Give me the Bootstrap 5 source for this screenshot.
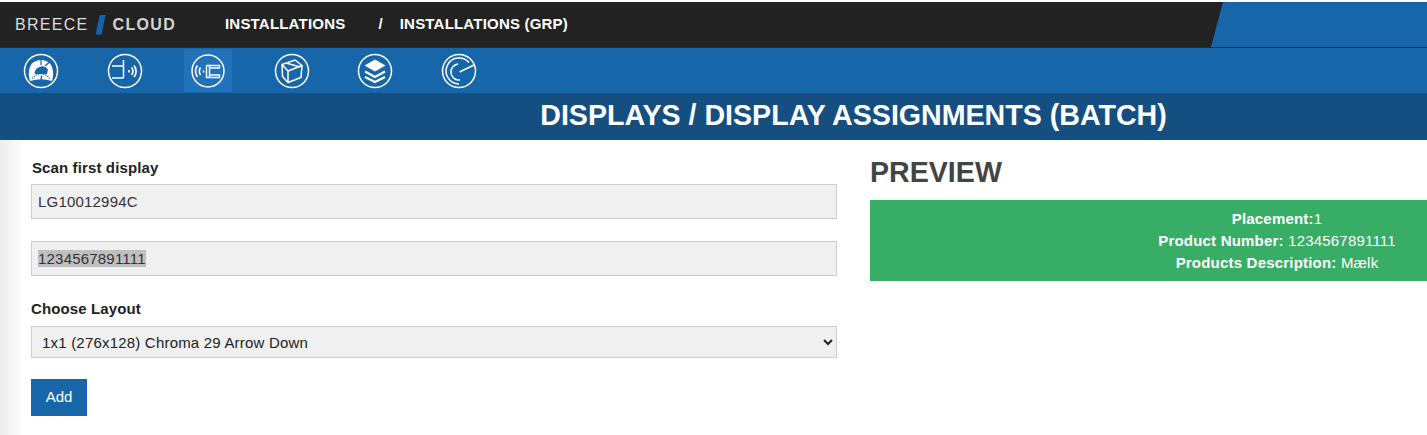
<!DOCTYPE html>
<html lang="en">
<head>
    <meta charset="UTF-8">
    <meta name="viewport" content="width=device-width, initial-scale=1.0">
    <title>Displays / Display Assignments (Batch)</title>
    <link href="https://cdn.jsdelivr.net/npm/bootstrap@5.3.0/dist/css/bootstrap.min.css" rel="stylesheet">
    <style>
        body {
            font-family: "Liberation Sans", Arial, sans-serif;
            font-size: 15px;
            letter-spacing: .2px;
            background: #fff;
            color: #222;
            padding-top: 2px;
            overflow: hidden;
        }
        .top-bar {
            height: 46px;
            background: #222;
            border-bottom: 1px solid #1c2f42;
        }
        .brand {
            width: 225px;
            padding-left: 15px;
            font-size: 16px;
            letter-spacing: 1.3px;
            color: #ddd;
        }
        .brand-slash {
            width: 10px;
            height: 20px;
            margin: 0 7px;
            background: #0f64ad;
            clip-path: polygon(40% 0, 100% 0, 60% 100%, 0 100%);
        }
        .brand-cloud { font-weight: 700; color: #d4d4d4; }
        .crumb {
            color: #fff;
            font-weight: 700;
        }
        .crumb-sep { margin: 0 17px 0 33px; }
        .corner {
            width: 216px;
            height: 45px;
            background: #1766aa;
            clip-path: polygon(12px 0, 100% 0, 100% 100%, 0 100%);
        }
        .icon-bar {
            height: 45px;
            background: #1766aa;
            padding-left: 17px;
            gap: 35.5px;
        }
        .icon-tile {
            width: 48px;
            height: 43px;
            margin-top: 1px;
        }
        .icon-tile.active { background: #2072ba; }
        .icon-tile svg { width: 36px; height: 36px; fill: none; stroke: #fff; stroke-width: 1.5; }
        .title-bar {
            height: 47px;
            background: #154f82;
            color: #fff;
            font-size: 28.6px;
            font-weight: 700;
            letter-spacing: 0;
            padding: 0 0 2px 280px;
        }
        .content-area {
            height: 295px;
            background: linear-gradient(to right, #ececec, #fff 25px);
        }
        .form-side { width: 856px; padding: 19px 19px 0 31px; }
        .preview-side { width: 571px; padding: 14px 0 0 14px; }
        .field-label {
            font-weight: 700;
            letter-spacing: .12px;
            line-height: 18px;
            margin: 0 0 7px 1px;
            display: block;
        }
        .field-label.flush { margin: 24px 0 8px; }
        .form-control.flat, .form-select.flat {
            height: 35px;
            padding: 0 6px;
            border: 1px solid #ccc;
            border-radius: 0;
            background-color: #f0f0f0;
            color: #333;
            font-size: 15px;
            letter-spacing: .2px;
            box-shadow: none;
        }
        .form-control.scan-gap { margin-bottom: 22px; }
        .form-select.flat {
            height: 32px;
            padding: 0 0 0 6px;
            color: #222;
            appearance: auto;
            background-image: none;
        }
        .form-control.flat::selection { background: #bfbfbf; color: #333; }
        .add-btn {
            width: 56px;
            height: 37px;
            margin-top: 21px;
            padding: 0;
            border: 0;
            border-radius: 0;
            background: #1766aa;
            color: #fff;
            font-size: 15px;
        }
        .preview-title {
            font-size: 28.6px;
            font-weight: 700;
            letter-spacing: 0;
            color: #444;
            line-height: 36px;
            margin: 0 0 10px;
        }
        .preview-box {
            height: 81px;
            background: #38ad66;
            color: #fff;
            padding: 8px 0 0 257px;
            line-height: 22px;
            text-align: center;
        }
    </style>
</head>
<body>
    <div class="top-bar d-flex align-items-center">
        <div class="brand d-flex align-items-center">
            <span>BREECE</span><span class="brand-slash"></span><span class="brand-cloud">CLOUD</span>
        </div>
        <span class="crumb">INSTALLATIONS</span>
        <span class="crumb crumb-sep">/</span>
        <span class="crumb">INSTALLATIONS (GRP)</span>
        <div class="corner ms-auto"></div>
    </div>

    <div class="icon-bar d-flex">
        <a class="icon-tile d-flex align-items-center justify-content-center">
            <svg viewBox="0 0 36 36"><circle cx="18" cy="18" r="16.500"/>
                <path d="M7 28C5 22 5.500 15 9 10.500A13 13 0 0 1 27 10.500C30.500 15 31 22 29 28Q18 24.500 7 28z" fill="#fff" stroke="none"/>
                <path d="M18 4.500V12M22 13 27 8.500" stroke="#1766aa" stroke-width="1.200"/>
                <path d="M11.500 20A7.500 7.500 0 0 1 25 16.500L24 21H12z" fill="#1766aa" stroke="none"/>
                <path d="M18.500 13V9.500" stroke="#fff" stroke-width="0"/>
                <path d="M9.500 25.500A10 10 0 0 1 26.500 25.500" stroke="#1766aa" stroke-width="1.500" stroke-dasharray="1 1.400"/>
                <path d="M18 26.500l.8-4" stroke="#1766aa" stroke-width="1.300"/>
            </svg>
        </a>
        <a class="icon-tile d-flex align-items-center justify-content-center">
            <svg viewBox="0 0 36 36"><circle cx="18" cy="18" r="16.500"/>
                <path d="M5 13h11.500M5 25h11.500M16.500 7v18"/>
                <path d="M22 17v2.500M24.500 14.500a6 6 0 0 1 0 7.500M27 12.500a9 9 0 0 1 0 11.500" stroke-width="1.700"/>
            </svg>
        </a>
        <a class="icon-tile active d-flex align-items-center justify-content-center">
            <svg viewBox="0 0 36 36"><circle cx="18" cy="18" r="16"/>
                <path d="M16.500 12v13M19.500 12v13" />
                <path d="M16.500 12.500H29.500V15H19.500M16.500 24.500H29.500V22H19.500" stroke-width="1.300"/>
                <path d="M13.500 17.500v2M10.500 14.500a7 7 0 0 0 0 7.500M7.500 12.500a10 10 0 0 0 0 11.500" stroke-width="1.600"/>
            </svg>
        </a>
        <a class="icon-tile d-flex align-items-center justify-content-center">
            <svg viewBox="0 0 36 36"><circle cx="18" cy="18" r="16.500"/>
                <path d="M8 11.500 21 7l7 5.500-1 12-13 5-5.500-6zM8 11.500l6 6.500 14-5.500M14 18v11.500M12 10l14 4"/>
            </svg>
        </a>
        <a class="icon-tile d-flex align-items-center justify-content-center">
            <svg viewBox="0 0 36 36"><circle cx="18" cy="18" r="16.500"/>
                <path d="M18 6.500l10.500 6-10.500 6-10.500-6z" fill="#fff" stroke="none"/>
                <path d="M8 18.500l10 5.500 10-5.500M8 24l10 5 10-5" stroke-width="2.200"/>
            </svg>
        </a>
        <a class="icon-tile d-flex align-items-center justify-content-center">
            <svg viewBox="0 0 36 36"><circle cx="18" cy="18" r="16.500"/>
                <path d="M28 9.600A13 13 0 1 0 18 31M17 11A8 8 0 1 0 19 27"/>
                <path d="M18.500 19 33 12"/>
            </svg>
        </a>
    </div>

    <div class="title-bar d-flex align-items-center justify-content-center">DISPLAYS / DISPLAY ASSIGNMENTS (BATCH)</div>

    <div class="content-area d-flex">
        <div class="form-side">
            <form>
                <label class="field-label" for="scanFirst">Scan first display</label>
                <input id="scanFirst" class="form-control flat scan-gap" type="text" value="LG10012994C">
                <input id="productNo" class="form-control flat" type="text" value="1234567891111">
                <label class="field-label flush" for="layout">Choose Layout</label>
                <select id="layout" class="form-select flat">
                    <option>1x1 (276x128) Chroma 29 Arrow Down</option>
                </select>
                <button type="button" class="btn add-btn">Add</button>
            </form>
        </div>
        <div class="preview-side">
            <h2 class="preview-title">PREVIEW</h2>
            <div class="preview-box">
                <div><b>Placement:</b>1</div>
                <div><b>Product Number:</b> 1234567891111</div>
                <div><b>Products Description:</b> Mælk</div>
            </div>
        </div>
    </div>

    <script src="https://cdn.jsdelivr.net/npm/bootstrap@5.3.0/dist/js/bootstrap.bundle.min.js"></script>
    <script>
        // second scan field keeps its value selected, ready for the next scan
        const productNo = document.getElementById('productNo');
        productNo.focus();
        productNo.select();
    </script>
</body>
</html>
